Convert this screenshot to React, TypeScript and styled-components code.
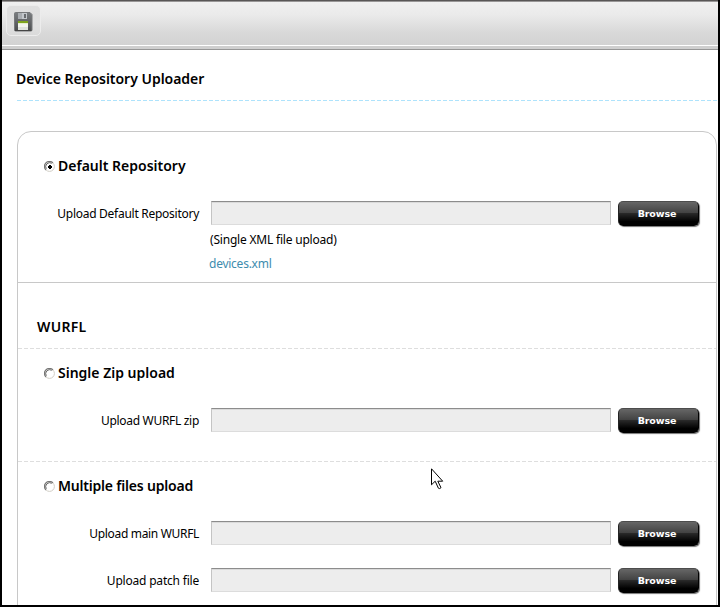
import React from "react";
import styled, { createGlobalStyle } from "styled-components";

const GlobalStyle = createGlobalStyle`
  * { box-sizing: border-box; }
  body { margin: 0; background: #fff; overflow: hidden; }
`;

const Frame = styled.div`
  position: relative;
  width: 720px;
  height: 607px;
  overflow: hidden;
  display: flex;
  flex-direction: column;
  background: #fff;
  border: solid #000;
  border-width: 0 2px 2px 2px;
  font-family: "Noto Sans", "Open Sans", sans-serif;
  color: #000;
`;

const Toolbar = styled.header`
  height: 50px;
  flex: none;
  padding: 4px 0 0 4px;
  border-top: 1px solid #585656;
  border-bottom: 1px solid #969696;
  background: linear-gradient(#989696 0 1px, #f0f0f0 1px, #eaeaea 14px, #d8d8d8 32px, #d2d2d2 44px, #fff 44px 45px, #cfcfcf 45px);
`;

const ToolButton = styled.button`
  display: flex;
  width: 35px;
  height: 31px;
  padding: 6px 0 0 7px;
  border: 1px solid #ececec;
  border-radius: 5px;
  background: linear-gradient(#dfdfdf, #e0e0e0 70%, #dadada);
`;

const PageTitle = styled.h1`
  height: 50px;
  margin: 0;
  padding-left: 14px;
  flex: none;
  font-size: 14px;
  line-height: 57px;
  font-weight: 600;
  letter-spacing: -0.02px;
  white-space: nowrap;
`;

const Dashes = styled.div<{ $color: string; $inset?: number }>`
  height: 1px;
  flex: none;
  margin-left: ${(p) => p.$inset ?? 0}px;
  background: repeating-linear-gradient(90deg, ${(p) => p.$color} 0 4px, transparent 4px 6px);
`;

const Panel = styled.main`
  width: 700px;
  height: 490px;
  flex: none;
  margin: 30px 0 0 15px;
  border: 1px solid #c8c8c8;
  border-radius: 14px;
`;

const Section = styled.section<{ $height: number; $top: number; $ruled?: boolean }>`
  height: ${(p) => p.$height}px;
  padding-top: ${(p) => p.$top}px;
  border-bottom: ${(p) => (p.$ruled ? "1px solid #c8c8c8" : "0")};
`;

const GroupTitle = styled.h2`
  height: 65px;
  margin: 0;
  padding: 0 0 0 19px;
  font-size: 14px;
  line-height: 88px;
  font-weight: 600;
  letter-spacing: 0.3px;
`;

const Choice = styled.label`
  display: flex;
  align-items: center;
  height: 20px;
  gap: 3px;
  padding-left: 26px;
`;

const Text = styled.span<{ $spacing?: number; $strong?: boolean }>`
  font-size: ${(p) => (p.$strong ? 14 : 12)}px;
  line-height: 20px;
  font-weight: ${(p) => (p.$strong ? 600 : 400)};
  letter-spacing: ${(p) => p.$spacing ?? 0}px;
  white-space: nowrap;
`;

const FileRow = styled.div<{ $top: number }>`
  display: grid;
  grid-template-columns: 181px 400px 81px;
  height: 26px;
  margin-top: ${(p) => p.$top}px;
  & > :nth-child(2) { margin-left: 12px; }
  & > :nth-child(3) { margin-left: 19px; }
`;

const LabelCell = styled.div`
  display: flex;
  justify-content: flex-end;
  align-items: center;
  height: 25px;
`;

const Field = styled.input`
  width: 400px;
  height: 24px;
  padding: 0 4px;
  border: 1px solid #c4c4c4;
  border-top-color: #8c8c8c;
  border-bottom-color: #dcdcdc;
  border-radius: 0;
  background: #ededed;
  box-shadow: inset 0 1px #dadada;
  outline: none;
`;

const Browse = styled.button`
  width: 81px;
  height: 25px;
  padding: 0 3px 0 0;
  border: 1px solid #222;
  border-top-color: #4c4c4c;
  border-right-color: #000;
  border-bottom-color: #000;
  border-radius: 5px;
  background: linear-gradient(#666, #434343 46%, #282828 50%, #000 85%);
  box-shadow: 1px 1px 1px rgba(0, 0, 0, 0.55);
  color: #fff;
  font: bold 9.5px/22px "DejaVu Sans", sans-serif;
  letter-spacing: -0.1px;
`;

const Notes = styled.div`
  display: flex;
  flex-direction: column;
  gap: 4px;
  padding: 3px 0 0 192px;
`;

const FileLink = styled.a`
  color: #3e8cae;
  margin-left: -1px;
  line-height: 20px;
  font-size: 12px;
  letter-spacing: -0.25px;
`;

const Pointer = styled.svg`
  position: absolute;
  left: 429px;
  top: 468px;
`;

const Disk = () => (
  <svg width="19" height="20" viewBox="0 0 19 20">
    <defs>
      <linearGradient id="shell" x1="0" y1="0" x2="0" y2="1">
        <stop offset="0" stopColor="#7b7e81" />
        <stop offset="1" stopColor="#4b4d4f" />
      </linearGradient>
    </defs>
    <path d="M1.5 .5h14.5l2 2v15.5q0 1-1 1h-15.500q-1 0-1-1v-16.500q0-1 1-1z" fill="url(#shell)" stroke="#77797b" />
    <path d="M1 18.500h16.500" stroke="#454545" />
    <rect x="4" y="1" width="9" height="6" fill="#c3c7cb" />
    <rect x="4" y="1" width="4" height="6" fill="#a9adb1" />
    <rect x="10" y="2" width="2" height="4" fill="#686b6e" />
    <rect x="4" y="9" width="10" height="9" fill="#f4f6ef" />
    <rect x="4" y="9" width="10" height="2" fill="#7fa51d" />
    <rect x="4" y="11" width="10" height="1" fill="#e6efcb" />
    <rect x="4" y="15" width="10" height="3" fill="#dfe2dd" />
  </svg>
);

const Radio = ({ on }: { on?: boolean }) => (
  <svg width="11" height="11" viewBox="0 0 11 11">
    <circle cx="5.500" cy="5.500" r="4.900" fill="#fff" stroke="#d0cdc5" strokeWidth="1" />
    <path d="M1.900 9A4.900 4.900 0 0 1 9 1.900" fill="none" stroke="#777" strokeWidth="1.200" />
    <path d="M2.300 7.800A4 4 0 0 1 7.800 2.300" fill="none" stroke="#444" strokeWidth=".8" />
    {on && <path d="M5 4h2v1h1v2h-1v1h-2v-1h-1v-2h1z" fill="#000" />}
  </svg>
);

const Upload = ({ label, top, spacing }: { label: string; top: number; spacing: number }) => (
  <FileRow $top={top}>
    <LabelCell><Text $spacing={spacing}>{label}</Text></LabelCell>
    <Field aria-label={label} readOnly />
    <Browse type="button">Browse</Browse>
  </FileRow>
);

export default function App() {
  return (
    <>
      <GlobalStyle />
      <Frame>
        <Toolbar>
          <ToolButton aria-label="Save"><Disk /></ToolButton>
        </Toolbar>
        <PageTitle>Device Repository Uploader</PageTitle>
        <Dashes $color="#aee3fc" $inset={15} />
        <Panel>
          <Section $height={151} $top={24} $ruled>
            <Choice><Radio on /><Text $strong>Default Repository</Text></Choice>
            <Upload label="Upload Default Repository" top={25} spacing={-0.27} />
            <Notes>
              <Text $spacing={-0.2}>(Single XML file upload)</Text>
              <FileLink>devices.xml</FileLink>
            </Notes>
          </Section>
          <GroupTitle>WURFL</GroupTitle>
          <Dashes $color="#dedede" />
          <Section $height={112} $top={14}>
            <Choice><Radio /><Text $strong>Single Zip upload</Text></Choice>
            <Upload label="Upload WURFL zip" top={25} spacing={-0.3} />
          </Section>
          <Dashes $color="#dedede" />
          <Section $height={145} $top={14}>
            <Choice><Radio /><Text $strong $spacing={-0.2}>Multiple files upload</Text></Choice>
            <Upload label="Upload main WURFL" top={25} spacing={-0.33} />
            <Upload label="Upload patch file" top={21} spacing={-0.2} />
          </Section>
        </Panel>
        <Pointer width="13" height="22" viewBox="0 0 13 22">
          <path d="M.5 .8v16l3.700-3.600 3.200 7q1 1 2.600-.5l-3.200-6.500h4.900z" fill="#fff" stroke="#000" />
        </Pointer>
      </Frame>
    </>
  );
}
